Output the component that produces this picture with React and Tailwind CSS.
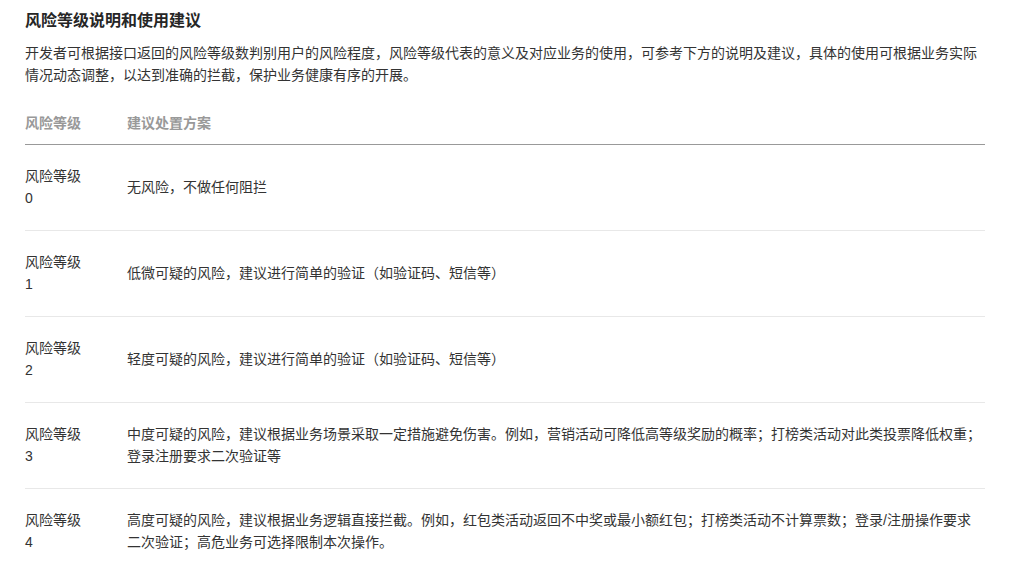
const levels = [
  { level: 0, text: ['无风险，不做任何阻拦'] },
  { level: 1, text: ['低微可疑的风险，建议进行简单的验证（如验证码、短信等）'] },
  { level: 2, text: ['轻度可疑的风险，建议进行简单的验证（如验证码、短信等）'] },
  {
    level: 3,
    text: [
      '中度可疑的风险，建议根据业务场景采取一定措施避免伤害。例如，营销活动可降低高等级奖励的概率；打榜类活动对此类投票降低权重；',
      '登录注册要求二次验证等',
    ],
  },
  {
    level: 4,
    text: [
      '高度可疑的风险，建议根据业务逻辑直接拦截。例如，红包类活动返回不中奖或最小额红包；打榜类活动不计算票数；登录/注册操作要求',
      '二次验证；高危业务可选择限制本次操作。',
    ],
  },
];

export default function App() {
  return (
    <div className="min-h-screen bg-white font-['Liberation_Sans','Noto_Sans_CJK_SC',sans-serif] text-[#333]">
      <div className="w-[960px] ml-[25px] pt-[9px]">
        {/* Title */}
        <h2 className="text-[16px] leading-[24px] font-bold text-[#262626]">风险等级说明和使用建议</h2>

        {/* Description */}
        <p className="mt-[9px] text-[14px] leading-[22px]">
          开发者可根据接口返回的风险等级数判别用户的风险程度，风险等级代表的意义及对应业务的使用，可参考下方的说明及建议，具体的使用可根据业务实际
          <br />
          情况动态调整，以达到准确的拦截，保护业务健康有序的开展。
        </p>

        {/* Table */}
        <div className="mt-[16px] text-[14px] leading-[22px]">
          <div className="grid grid-cols-[102px_1fr] border-b border-[#999] py-[10px] font-bold text-[#999]">
            <div>风险等级</div>
            <div>建议处置方案</div>
          </div>
          {levels.map((row) => (
            <div
              key={row.level}
              className="grid grid-cols-[102px_1fr] items-center border-b border-[#e8e8e8] pt-[20px] pb-[21px]"
            >
              <div className="w-[60px]">
                风险等级
                <br />
                {row.level}
              </div>
              <div>
                {row.text.map((line, i) => (
                  <div key={i}>{line}</div>
                ))}
              </div>
            </div>
          ))}
        </div>
      </div>
    </div>
  );
}
